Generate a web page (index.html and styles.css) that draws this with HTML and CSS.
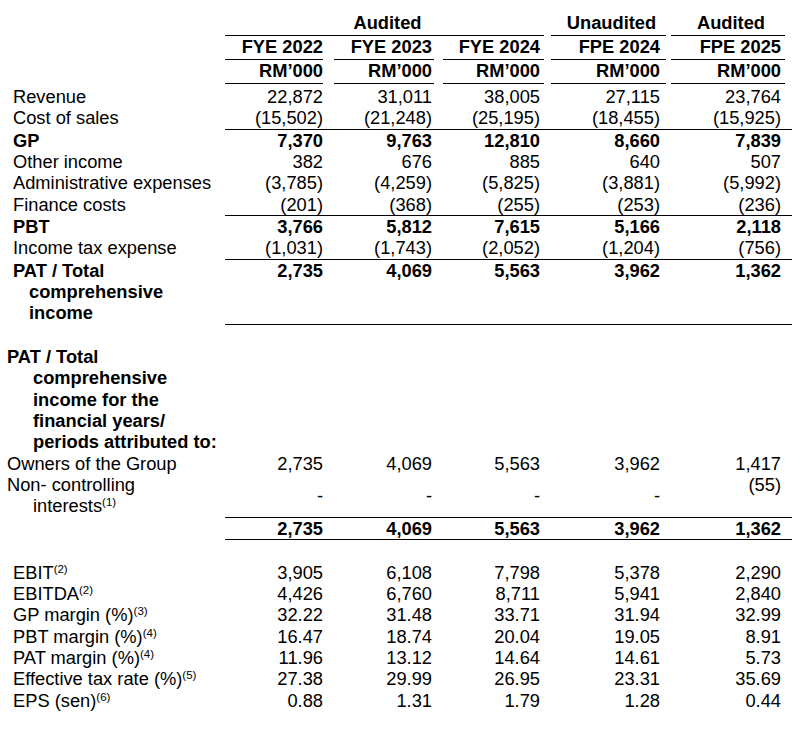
FILE: index.html
```html
<!DOCTYPE html>
<html lang="en">
<head>
<meta charset="utf-8">
<title>Financial highlights</title>
<link rel="stylesheet" href="styles.css">
</head>
<body>
<div class="fin">
  <div class="row head">
    <div class="lbl"></div>
    <div class="grp grp-a">Audited</div>
    <div class="grp grp-u">Unaudited</div>
    <div class="grp grp-b">Audited</div>
  </div>
  <div class="row head">
    <div class="lbl"></div>
    <div class="h h1">FYE 2022</div>
    <div class="h h2">FYE 2023</div>
    <div class="h h3">FYE 2024</div>
    <div class="h h4">FPE 2024</div>
    <div class="h h5">FPE 2025</div>
  </div>
  <div class="row head">
    <div class="lbl"></div>
    <div class="h h1">RM’000</div>
    <div class="h h2">RM’000</div>
    <div class="h h3">RM’000</div>
    <div class="h h4">RM’000</div>
    <div class="h h5">RM’000</div>
  </div>

  <div class="row first">
    <div class="lbl">Revenue</div>
    <div class="num">22,872</div><div class="num">31,011</div><div class="num">38,005</div><div class="num">27,115</div><div class="num">23,764</div>
  </div>
  <div class="row rule">
    <div class="lbl">Cost of sales</div>
    <div class="num">(15,502)</div><div class="num">(21,248)</div><div class="num">(25,195)</div><div class="num">(18,455)</div><div class="num">(15,925)</div>
  </div>
  <div class="row bold">
    <div class="lbl">GP</div>
    <div class="num">7,370</div><div class="num">9,763</div><div class="num">12,810</div><div class="num">8,660</div><div class="num">7,839</div>
  </div>
  <div class="row">
    <div class="lbl">Other income</div>
    <div class="num">382</div><div class="num">676</div><div class="num">885</div><div class="num">640</div><div class="num">507</div>
  </div>
  <div class="row">
    <div class="lbl">Administrative expenses</div>
    <div class="num">(3,785)</div><div class="num">(4,259)</div><div class="num">(5,825)</div><div class="num">(3,881)</div><div class="num">(5,992)</div>
  </div>
  <div class="row rule">
    <div class="lbl">Finance costs</div>
    <div class="num">(201)</div><div class="num">(368)</div><div class="num">(255)</div><div class="num">(253)</div><div class="num">(236)</div>
  </div>
  <div class="row bold">
    <div class="lbl">PBT</div>
    <div class="num">3,766</div><div class="num">5,812</div><div class="num">7,615</div><div class="num">5,166</div><div class="num">2,118</div>
  </div>
  <div class="row rule">
    <div class="lbl">Income tax expense</div>
    <div class="num">(1,031)</div><div class="num">(1,743)</div><div class="num">(2,052)</div><div class="num">(1,204)</div><div class="num">(756)</div>
  </div>
  <div class="row bold rule">
    <div class="lbl hang-a">PAT / Total<br>comprehensive<br>income</div>
    <div class="num">2,735</div><div class="num">4,069</div><div class="num">5,563</div><div class="num">3,962</div><div class="num">1,362</div>
  </div>

  <div class="row blank"><div class="lbl"></div></div>

  <div class="row bold sec2">
    <div class="lbl hang-b">PAT / Total<br>comprehensive<br>income for the<br>financial years/<br>periods attributed to:</div>
  </div>
  <div class="row sec2">
    <div class="lbl hang-b">Owners of the Group</div>
    <div class="num">2,735</div><div class="num">4,069</div><div class="num">5,563</div><div class="num">3,962</div><div class="num">1,417</div>
  </div>
  <div class="row sec2 rule">
    <div class="lbl hang-b">Non- controlling<br>interests<sup>(1)</sup></div>
    <div class="num mid">-</div><div class="num mid">-</div><div class="num mid">-</div><div class="num mid">-</div><div class="num">(55)</div>
  </div>
  <div class="row bold rule">
    <div class="lbl"></div>
    <div class="num">2,735</div><div class="num">4,069</div><div class="num">5,563</div><div class="num">3,962</div><div class="num">1,362</div>
  </div>

  <div class="row blank"><div class="lbl"></div></div>

  <div class="row">
    <div class="lbl">EBIT<sup>(2)</sup></div>
    <div class="num">3,905</div><div class="num">6,108</div><div class="num">7,798</div><div class="num">5,378</div><div class="num">2,290</div>
  </div>
  <div class="row">
    <div class="lbl">EBITDA<sup>(2)</sup></div>
    <div class="num">4,426</div><div class="num">6,760</div><div class="num">8,711</div><div class="num">5,941</div><div class="num">2,840</div>
  </div>
  <div class="row">
    <div class="lbl">GP margin (%)<sup>(3)</sup></div>
    <div class="num">32.22</div><div class="num">31.48</div><div class="num">33.71</div><div class="num">31.94</div><div class="num">32.99</div>
  </div>
  <div class="row">
    <div class="lbl">PBT margin (%)<sup>(4)</sup></div>
    <div class="num">16.47</div><div class="num">18.74</div><div class="num">20.04</div><div class="num">19.05</div><div class="num">8.91</div>
  </div>
  <div class="row">
    <div class="lbl">PAT margin (%)<sup>(4)</sup></div>
    <div class="num">11.96</div><div class="num">13.12</div><div class="num">14.64</div><div class="num">14.61</div><div class="num">5.73</div>
  </div>
  <div class="row">
    <div class="lbl">Effective tax rate (%)<sup>(5)</sup></div>
    <div class="num">27.38</div><div class="num">29.99</div><div class="num">26.95</div><div class="num">23.31</div><div class="num">35.69</div>
  </div>
  <div class="row">
    <div class="lbl">EPS (sen)<sup>(6)</sup></div>
    <div class="num">0.88</div><div class="num">1.31</div><div class="num">1.79</div><div class="num">1.28</div><div class="num">0.44</div>
  </div>
</div>
</body>
</html>
```

FILE: styles.css
```css
html, body {
  margin: 0;
  padding: 0;
  background: #ffffff;
}

body {
  color: #000000;
  font-family: "Liberation Sans", Arial, sans-serif;
  font-size: 18.3px;
  line-height: 21.35px;
}

.fin {
  width: 792px;
  padding-top: 12px;
}

.row {
  display: grid;
  grid-template-columns: 225px 109px 109px 108px 120px 121px;
}

.row.first {
  padding-top: 2px;
}

.lbl {
  padding-left: 13px;
  white-space: nowrap;
}

.bold {
  font-weight: bold;
}

.num {
  text-align: right;
  padding-right: 11px;
  white-space: nowrap;
}

.num.mid {
  display: flex;
  align-items: center;
  justify-content: flex-end;
}

.rule .num {
  border-bottom: 1px solid #000;
}

.rule .lbl {
  padding-bottom: 1px;
}

.blank {
  height: 21.35px;
}

/* hanging indents */
.hang-a {
  padding-left: 29px;
  text-indent: -16px;
}

.sec2 .hang-b {
  padding-left: 33px;
  text-indent: -26px;
}

sup {
  font-size: 11.5px;
  line-height: 0;
  vertical-align: 6px;
}

/* header */
.head {
  font-weight: bold;
}

.grp,
.h {
  border-bottom: 1px solid #000;
  padding-bottom: 1.65px;
}

.grp {
  text-align: center;
}

.grp-a {
  grid-column: 2 / 5;
  margin-right: 7px;
  padding-left: 6px;
}

.grp-u {
  grid-column: 5 / 6;
  margin-right: 5px;
  padding-left: 6px;
}

.grp-b {
  grid-column: 6 / 7;
  margin-right: 7px;
  padding-left: 6px;
}

.h {
  text-align: right;
}

.h1 { margin-right: 11px; padding-right: 0; }
.h2 { margin-right: 9px;  padding-right: 2px; }
.h3 { margin-right: 7px;  padding-right: 4px; }
.h4 { margin-right: 5px;  padding-right: 6px; }
.h5 { margin-right: 7px;  padding-right: 4px; }
```
